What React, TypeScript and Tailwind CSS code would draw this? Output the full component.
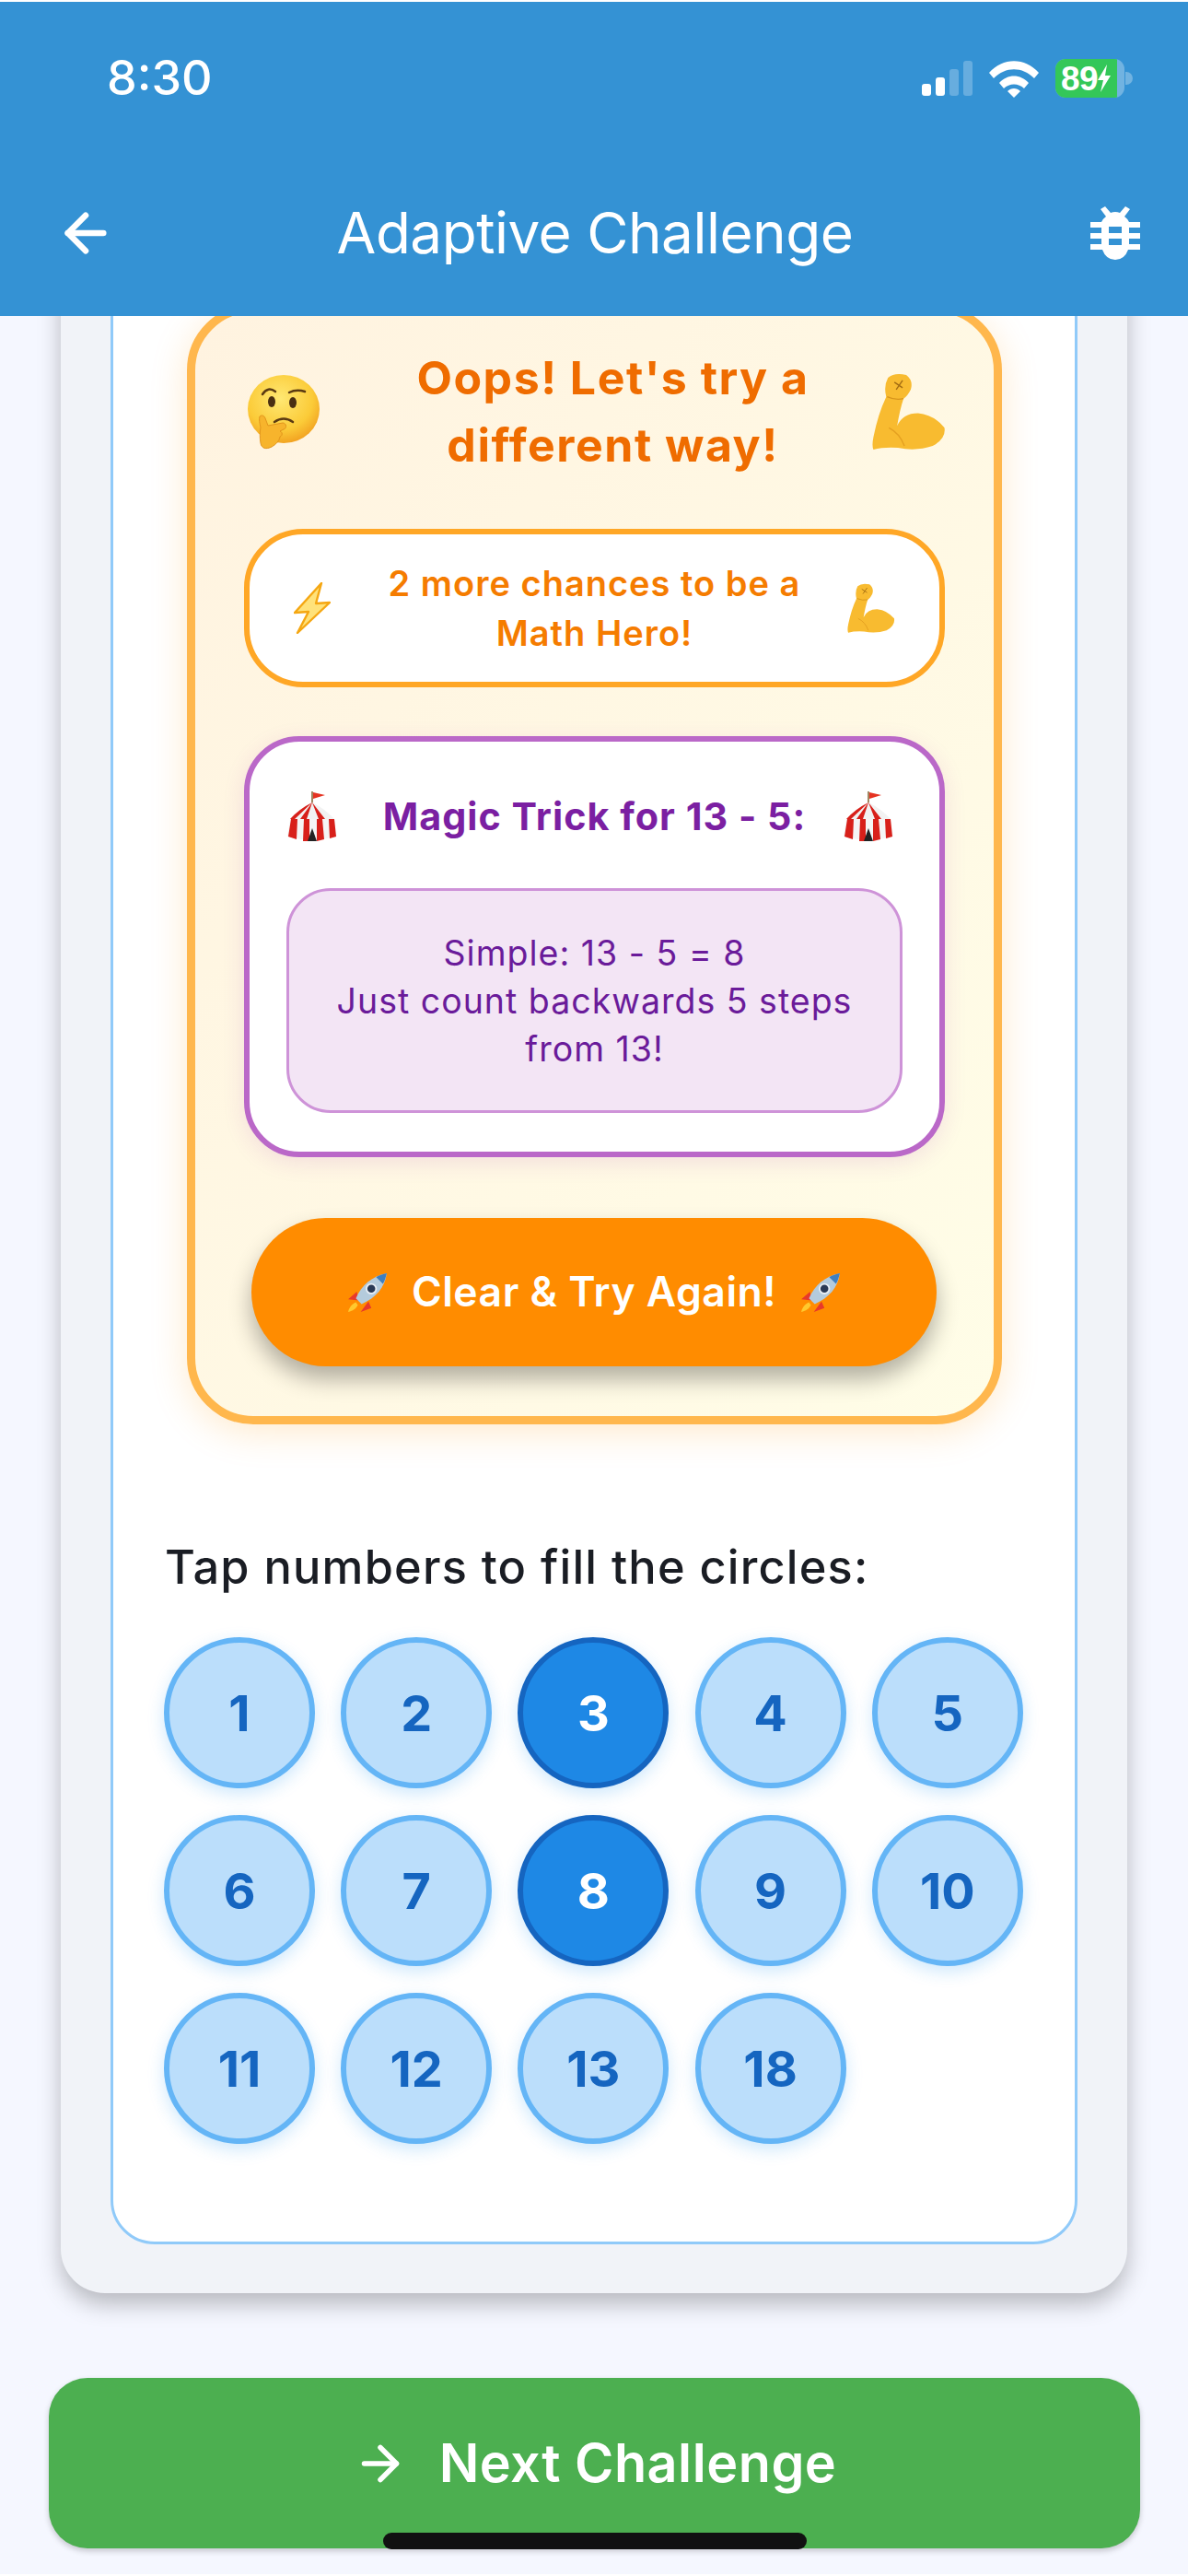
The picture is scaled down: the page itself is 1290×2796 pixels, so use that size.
import { ArrowLeft, ArrowRight } from "lucide-react";

const numbers = [1, 2, 3, 4, 5, 6, 7, 8, 9, 10, 11, 12, 13, 18];
const selected = [3, 8];

const ThinkingEmoji = () => (
  <svg viewBox="0 0 80 82" className="w-[80px] h-[82px] shrink-0">
    <defs>
      <radialGradient id="faceFill" cx="45%" cy="35%" r="70%">
        <stop offset="0%" stopColor="#ffe873" />
        <stop offset="65%" stopColor="#fbcb38" />
        <stop offset="100%" stopColor="#f09a1c" />
      </radialGradient>
    </defs>
    <ellipse cx="40" cy="38" rx="39" ry="37" fill="url(#faceFill)" />
    <path d="M17 22q6-9 14-3" fill="none" stroke="#5b3a12" strokeWidth="2.5" strokeLinecap="round" />
    <path d="M46 20q8-4 17-1" fill="none" stroke="#5b3a12" strokeWidth="2.5" strokeLinecap="round" />
    <ellipse cx="27" cy="30" rx="4" ry="6" fill="#4a2f12" />
    <ellipse cx="50" cy="31" rx="4" ry="6" fill="#4a2f12" />
    <path d="M30 52q10-7 20 0" fill="none" stroke="#5b3a12" strokeWidth="2.5" strokeLinecap="round" />
    <path d="M14 46c2-2 5-1 6 2l3 8 16-3c4 0 5 6 1 7l-4 2c3 1 3 5 0 6-1 5-4 8-9 11-6 3-11 2-12-4-1-6-1-12 0-17-1-4-2-9-1-12z" fill="#f7b42c" stroke="#e2951c" strokeWidth="1" />
  </svg>
);

const MuscleEmoji = ({ small }: { small?: boolean }) => (
  <svg viewBox="0 0 80 86" className={small ? "w-[52px] h-[55px] shrink-0" : "w-[80px] h-[85px] shrink-0"}>
    <path d="M17 5Q24-1 37 2Q45 8 42 18Q38 26 34 28Q30 40 27 58Q33 44 50 44Q68 46 79 60Q81 72 66 80Q48 86 28 82Q12 81 1 84Q-1 80 1 70Q6 45 15 26Q12 14 17 5z" fill="#f8bb30" />
    <path d="M24 10l9 6M33 8l-7 10" fill="none" stroke="#a36c12" strokeWidth="1.4" />
    <path d="M16 26q9 4 18 2" fill="none" stroke="#d8951c" strokeWidth="1.4" />
    <path d="M18 60q12 6 17 20" fill="none" stroke="#e4a021" strokeWidth="1.5" />
  </svg>
);

const BoltEmoji = () => (
  <svg viewBox="0 0 40 56" className="w-[40px] h-[56px] shrink-0">
    <path d="M30 1L1 33l15-1-12 23 35-33-15 1z" fill="#ffe27a" stroke="#f5a712" strokeWidth="2.4" strokeLinejoin="round" />
  </svg>
);

const TentEmoji = () => (
  <svg viewBox="0 0 56 56" className="w-[56px] h-[56px] shrink-0">
    <path d="M28 1v13" stroke="#8a6a3a" strokeWidth="1.6" />
    <path d="M29 2l13 3-13 4z" fill="#e53322" />
    <path d="M28 13Q14 20 4 31h48Q42 20 28 13z" fill="#f2f2f2" />
    <path d="M28 13L15 31h7zM28 13l7 18h7zM28 13Q14 20 4 31h5z" fill="#d8201a" />
    <path d="M4 31h48l3 19q-27 7-54 0z" fill="#f5f5f5" />
    <path d="M5 31h7l-1 22-9-3zM19 31h6v24h-7zM33 31h6l2 22-8 2zM46 31h6l2 19-7 2z" fill="#d8201a" />
    <path d="M23 55l5-14 5 14z" fill="#222" />
  </svg>
);

const RocketEmoji = () => (
  <svg viewBox="0 0 42 42" className="w-[44px] h-[44px] shrink-0">
    <path d="M10 20L1 28l11 1z" fill="#e8392a" />
    <path d="M22 30l-8 11 11-4z" fill="#e8392a" />
    <path d="M9 31c-4 2-7 5-8 10 5-1 8-3 10-7z" fill="#ffc92e" />
    <path d="M9 27C15 13 26 4 41 1c-2 15-11 25-26 32z" fill="#b4cbdc" />
    <path d="M30 5c3-2 7-3 11-4-1 4-2 8-4 11z" fill="#3f7fbf" />
    <circle cx="25" cy="17" r="5" fill="#2b3a55" stroke="#e8eef4" strokeWidth="1.8" />
  </svg>
);

const WifiIcon = () => (
  <svg viewBox="0 0 54 41" className="w-[54px] h-[41px]">
    <path d="M0 14C15-3 39-3 54 14l-5 6C36 7 18 7 5 20z" fill="#fff" />
    <path d="M11 25c9-10 23-10 32 0l-5 6c-6-6-16-6-22 0z" fill="#fff" />
    <path d="M20 34c4-4 10-4 14 0l-7 7z" fill="#fff" />
  </svg>
);

const BugIcon = () => (
  <svg viewBox="0 0 54 58" className="w-[54px] h-[58px]">
    <path d="M11 3l5-3 6 7q5-2 10 0l6-7 5 3-6 8q4 3 5 6h12v6H42v6h12v6H42v6h12v6H41q-4 11-14 11T13 47H0v-6h12v-6H0v-6h12v-6H0v-6h12q1-3 5-6z" fill="#fff" />
    <rect x="20" y="22" width="14" height="7" fill="#3492d4" />
    <rect x="20" y="35" width="14" height="7" fill="#3492d4" />
  </svg>
);

const StatusBar = () => (
  <div className="flex items-center justify-between h-[40px] pl-[116px] pr-[60px] mt-[63px]">
    <span className="text-[52px] leading-[40px] font-medium">8:30</span>
    <div className="flex items-center">
      <div className="flex items-end gap-[5px] h-[38px]">
        <div className="w-[10px] h-[13px] rounded-[3px] bg-white" />
        <div className="w-[10px] h-[20px] rounded-[3px] bg-white" />
        <div className="w-[10px] h-[29px] rounded-[3px] bg-white/25" />
        <div className="w-[10px] h-[38px] rounded-[3px] bg-white/25" />
      </div>
      <div className="ml-[18px]">
        <WifiIcon />
      </div>
      <div className="ml-[18px] flex items-center">
        <div className="flex w-[75px] h-[42px] rounded-[11px] overflow-hidden bg-white/30">
          <div className="flex items-center w-[67px] bg-[#34c759] text-[37px] leading-none font-bold tracking-[-0.5px] font-['Liberation_Sans',sans-serif] pl-[6px]">
            89
            <svg viewBox="0 0 14 30" className="w-[14px] h-[30px] -mr-[8px] shrink-0">
              <path d="M10 0L0 17h6L3 30l11-18H8z" fill="#fff" />
            </svg>
          </div>
        </div>
        <div className="w-[8px] h-[14px] ml-[1px] rounded-r-full bg-white/30" />
      </div>
    </div>
  </div>
);

const NumberCircle = ({ value }: { value: number }) => {
  const active = selected.includes(value);
  return (
    <div
      className={
        active
          ? "w-[164px] h-[164px] rounded-full flex items-center justify-center border-[6px] border-[#1565c0] bg-[#1e88e5] text-white text-[54px] font-bold shadow-[0_6px_18px_rgba(33,150,243,0.22)]"
          : "w-[164px] h-[164px] rounded-full flex items-center justify-center border-[6px] border-[#64b5f6] bg-[#bbdefb] text-[#1565c0] text-[54px] font-bold shadow-[0_6px_18px_rgba(33,150,243,0.22)]"
      }
    >
      {value}
    </div>
  );
};

export default function App() {
  return (
    <div className="w-[1290px] h-[2796px] flex flex-col overflow-hidden bg-[#f5f7ff] font-['Inter',sans-serif] border-y-2 border-white">
      {/* App bar */}
      <header className="relative z-10 h-[341px] shrink-0 bg-[#3492d4] text-white">
        <StatusBar />
        <div className="flex items-center justify-between pl-[60px] pr-[52px] mt-[112px]">
          <ArrowLeft className="w-[66px] h-[66px]" strokeWidth={2.4} />
          <h1 className="mr-[18px] text-[62px] leading-[72px] font-normal tracking-[-0.5px]">Adaptive Challenge</h1>
          <BugIcon />
        </div>
      </header>

      <main className="flex-1 overflow-hidden">
        {/* Scrolled card, its top edge is under the app bar */}
        <section className="mx-[66px] -mt-[100px] pt-[54px] px-[54px] pb-[53px] rounded-[48px] bg-[#f1f3f8] shadow-[0_12px_24px_rgba(0,0,0,0.25)]">
          <div className="border-[3px] border-[#90caf9] rounded-[48px] bg-white pt-[30px] pb-[106px]">
            <div className="mx-[80px] w-[885px] border-[9px] border-[#ffb74d] rounded-[72px] bg-gradient-to-br from-[#fff3e0] to-[#fffde7] shadow-[0_8px_40px_rgba(255,152,0,0.2)] pt-[35px] pb-[54px] pl-[56px] pr-[52px]">
              <div className="flex items-center">
                <ThinkingEmoji />
                <h2 className="flex-1 ml-[68px] mr-[32px] text-center text-[50px] leading-[73px] font-bold tracking-[1.5px] text-[#ef6c00]">
                  Oops! Let's try a different way!
                </h2>
                <MuscleEmoji />
              </div>

              <div className="flex items-center mt-[54px] -ml-[3px] mr-[1px] px-[48px] py-[26px] rounded-[64px] border-[6px] border-[#ffa726] bg-white">
                <BoltEmoji />
                <p className="flex-1 ml-[46px] mr-[34px] text-center text-[38px] leading-[54px] font-semibold tracking-[1px] text-[#f57c00]">
                  2 more chances to be a Math Hero!
                </p>
                <MuscleEmoji small />
              </div>

              <div className="mt-[53px] -ml-[3px] mr-[1px] px-[40px] pt-[53px] pb-[42px] rounded-[60px] border-[6px] border-[#ba68c8] bg-white shadow-[0_6px_24px_rgba(156,39,176,0.12)]">
                <div className="flex items-center">
                  <TentEmoji />
                  <h3 className="flex-1 pl-[9px] text-center text-[41.3px] leading-[50px] font-bold tracking-[1px] text-[#7b1fa2]">
                    Magic Trick for 13 - 5:
                  </h3>
                  <TentEmoji />
                  <div className="w-[9px] shrink-0" />
                </div>
                <div className="mt-[50px] pt-[42px] pb-[40px] px-[30px] rounded-[48px] border-[3px] border-[#ce93d8] bg-[#f3e5f5] text-center text-[37.5px] leading-[52px] tracking-[1px] text-[#6a1b9a]">
                  <p>Simple: 13 - 5 = 8</p>
                  <p>Just count backwards 5 steps from 13!</p>
                </div>
              </div>

              <button className="flex items-center justify-center gap-[26px] w-[744px] h-[161px] mt-[66px] ml-[5px] rounded-full bg-[#ff8c00] text-white text-[44.5px] font-semibold tracking-[0.5px] shadow-[0_14px_24px_rgba(0,0,0,0.3)]">
                <RocketEmoji />
                Clear &amp; Try Again!
                <RocketEmoji />
              </button>
            </div>

            <div className="pl-[55px]">
              <p className="mt-[125px] ml-[1px] text-[50.5px] leading-[60px] font-medium tracking-[1.2px] text-[#1a1d24]">
                Tap numbers to fill the circles:
              </p>
              <div className="grid grid-cols-[repeat(5,164px)] gap-x-[28.2px] gap-y-[29px] mt-[46px]">
                {numbers.map((n) => (
                  <NumberCircle key={n} value={n} />
                ))}
              </div>
            </div>
          </div>
        </section>

        <div className="relative mx-[53px] mt-[92px]">
          <button className="flex items-center justify-center gap-[34px] w-[1185px] h-[185px] rounded-[42px] bg-[#4caf50] text-white text-[57.5px] font-semibold tracking-[0.5px] shadow-[0_3px_6px_rgba(0,0,0,0.2)]">
            <ArrowRight className="w-[60px] h-[60px]" strokeWidth={2.2} />
            Next Challenge
          </button>
          {/* Home indicator */}
          <div className="absolute left-[363px] bottom-[-1px] w-[460px] h-[18px] rounded-full bg-[#111]" />
        </div>
      </main>
    </div>
  );
}
